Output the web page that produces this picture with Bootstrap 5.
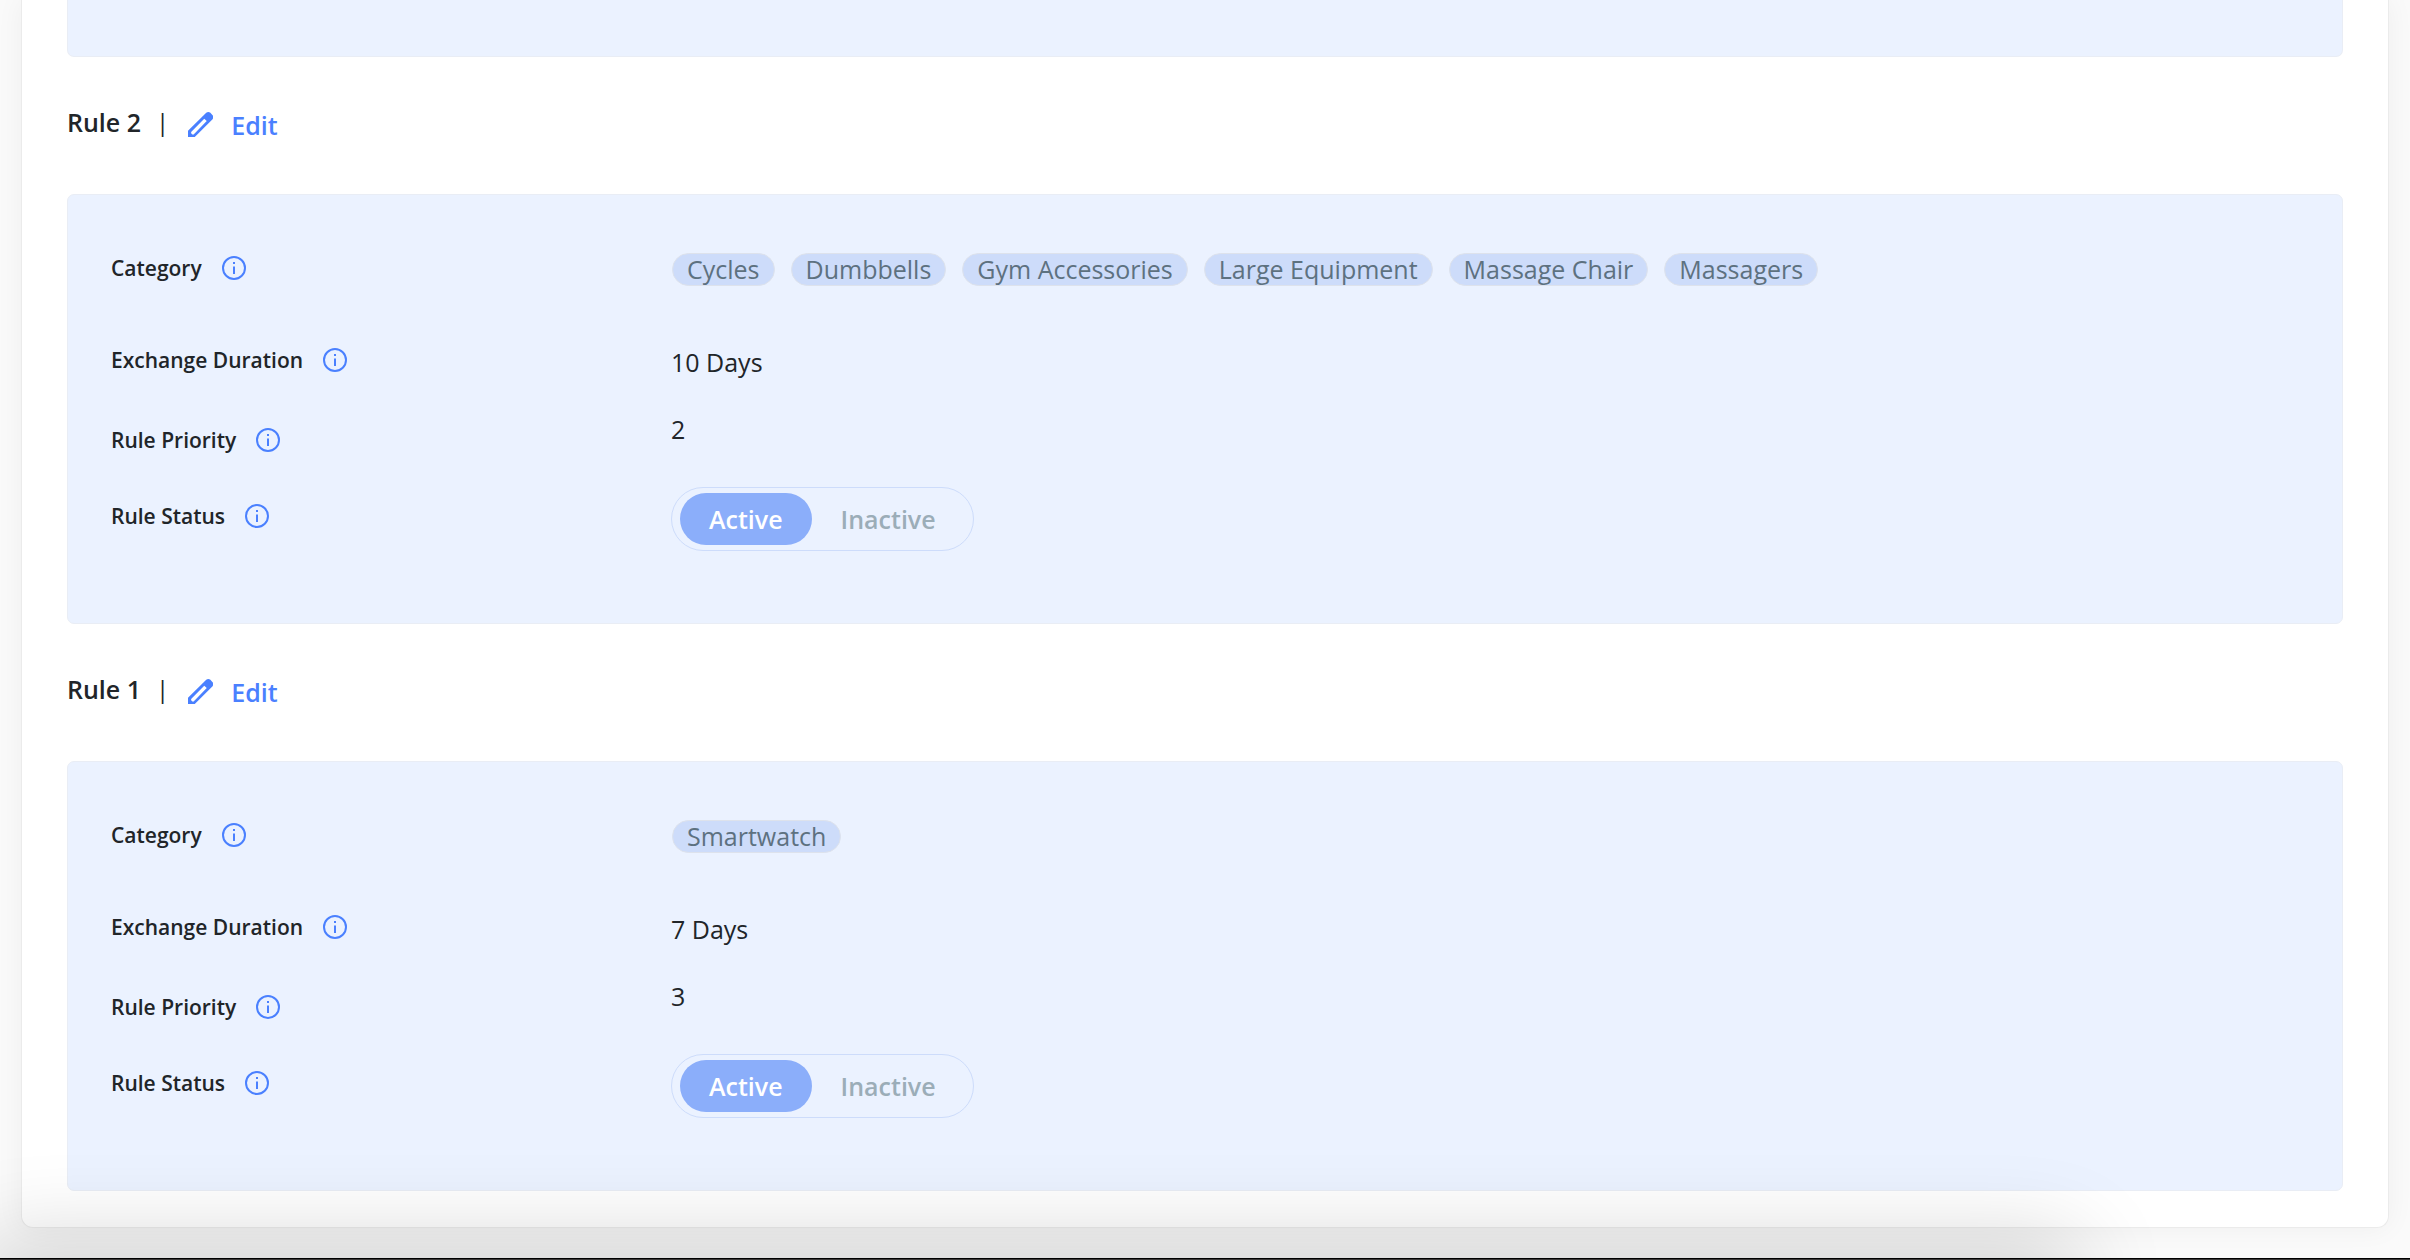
<!DOCTYPE html>
<html lang="en">
<head>
<meta charset="utf-8">
<meta name="viewport" content="width=device-width, initial-scale=1">
<title>Exchange rules</title>
<link href="https://cdn.jsdelivr.net/npm/bootstrap@5.3.0/dist/css/bootstrap.min.css" rel="stylesheet">
<style>
  body { font-family: "Open Sans", "Noto Sans", sans-serif; font-size: 25px; line-height: 36px; color: #212529; background: #fafafa; }
  .page-wrap { min-height: 100vh; overflow: hidden; }
  .rules-card { margin: 0 21px; padding: 0 45px 36px; background: #fff; border: 1px solid #ebebeb; border-width: 0 1px 1px; border-radius: 0 0 12px 12px; box-shadow: 0 0 28px rgba(0,0,0,.05); }
  .rule-panel { background: #ebf2ff; border: 1px solid #e9edf5; border-radius: 7px; padding: 55px 43px 72px; }
  .rule-panel-end { height: 57px; border-top: 0; border-radius: 0 0 7px 7px; padding: 0; }
  .rule-head { height: 137px; padding-top: 47px; }
  .rule-title { font-size: 25px; line-height: 36px; font-weight: 600; }
  .rule-bar { font-size: 24px; margin: 0 19px 0 15px; }
  .edit-btn { margin-top: 3px; gap: 18px; color: #4a80ff; font-weight: 600; font-size: 25px; line-height: 36px; }
  .edit-btn svg { margin-bottom: 2px; }
  .rule-row { display: grid; grid-template-columns: 560px 1fr; align-items: start; }
  .row-category { height: 92px; }
  .row-duration { height: 69px; }
  .row-priority { height: 76px; }
  .row-category dd { padding-top: 3px; }
  .row-duration dd { padding-top: 2px; }
  .row-priority dt, .row-status dt { padding-top: 11px; }
  .rule-row dt { font-size: 21px; font-weight: 600; gap: 20px; }
  .chip { height: 33px; line-height: 31px; padding: 0 14px; border: 1px solid #dde2ec; border-radius: 17px; background: #cddcfa; color: #5d7180; }
  .chip-list { gap: 16px; margin-left: 1px; }
  .status-toggle { height: 64px; padding: 5px 8px; border: 1px solid #cddcfb; border-radius: 32px; }
  .status-toggle label { height: 52px; line-height: 52px; padding: 0 29px; border-radius: 26px; font-weight: 600; color: #9badb8; }
  .status-toggle .btn-check:checked + label { background: #8baefa; color: #fff; }
  .dock-shadow { position: absolute; left: 0; right: 350px; bottom: -44px; height: 44px; box-shadow: 0 0 90px 18px rgba(0,0,0,.18); }
  .bottom-edge { height: 2px; background: #3a3838; border-top: 1px solid #000; }
</style>
</head>
<body>
<svg class="d-none">
  <symbol id="ic-info" viewBox="0 0 24 24"><circle cx="12" cy="12" r="11" fill="none" stroke="#4a80ff" stroke-width="2"/><path d="M11 6h2v2h-2zM11 10.500h2v7.500h-2z" fill="#4a80ff"/></symbol>
  <symbol id="ic-pencil" viewBox="0 0 24 24"><path fill="#4a80ff" fill-rule="evenodd" d="M0 24v-6L17.500 .8Q19.500-.8 21.500.8L23.600 3Q25 5 23.600 7L6.500 24ZM3 19.200V20.500L4.200 21.500H5.400L18 8.700 15.600 6.500Z"/></symbol>
</svg>
<div class="page-wrap position-relative d-flex flex-column">
  <main class="rules-card">
    <section class="rule-panel rule-panel-end" aria-label="Rule 3"></section>

    <header class="rule-head d-flex align-items-start">
      <h2 class="rule-title mb-0">Rule 2</h2><span class="rule-bar">|</span>
      <button type="button" class="edit-btn btn p-0 border-0 d-flex align-items-center"><svg width="25" height="25"><use href="#ic-pencil"/></svg>Edit</button>
    </header>
    <dl class="rule-panel mb-0">
      <div class="rule-row row-category"><dt class="d-flex align-items-center">Category <svg width="24" height="24"><use href="#ic-info"/></svg></dt>
        <dd class="mb-0"><div class="chip-list d-flex flex-wrap"><span class="chip">Cycles</span><span class="chip">Dumbbells</span><span class="chip">Gym Accessories</span><span class="chip">Large Equipment</span><span class="chip">Massage Chair</span><span class="chip">Massagers</span></div></dd></div>
      <div class="rule-row row-duration"><dt class="d-flex align-items-center">Exchange Duration <svg width="24" height="24"><use href="#ic-info"/></svg></dt><dd class="mb-0">10 Days</dd></div>
      <div class="rule-row row-priority"><dt class="d-flex align-items-center">Rule Priority <svg width="24" height="24"><use href="#ic-info"/></svg></dt><dd class="mb-0">2</dd></div>
      <div class="rule-row row-status"><dt class="d-flex align-items-center">Rule Status <svg width="24" height="24"><use href="#ic-info"/></svg></dt>
        <dd class="mb-0 d-flex"><div class="status-toggle d-flex">
          <input class="btn-check" type="radio" name="status2" id="active2" checked disabled><label for="active2">Active</label>
          <input class="btn-check" type="radio" name="status2" id="inactive2" disabled><label for="inactive2">Inactive</label>
        </div></dd></div>
    </dl>

    <header class="rule-head d-flex align-items-start">
      <h2 class="rule-title mb-0">Rule 1</h2><span class="rule-bar">|</span>
      <button type="button" class="edit-btn btn p-0 border-0 d-flex align-items-center"><svg width="25" height="25"><use href="#ic-pencil"/></svg>Edit</button>
    </header>
    <dl class="rule-panel mb-0">
      <div class="rule-row row-category"><dt class="d-flex align-items-center">Category <svg width="24" height="24"><use href="#ic-info"/></svg></dt>
        <dd class="mb-0"><div class="chip-list d-flex flex-wrap"><span class="chip">Smartwatch</span></div></dd></div>
      <div class="rule-row row-duration"><dt class="d-flex align-items-center">Exchange Duration <svg width="24" height="24"><use href="#ic-info"/></svg></dt><dd class="mb-0">7 Days</dd></div>
      <div class="rule-row row-priority"><dt class="d-flex align-items-center">Rule Priority <svg width="24" height="24"><use href="#ic-info"/></svg></dt><dd class="mb-0">3</dd></div>
      <div class="rule-row row-status"><dt class="d-flex align-items-center">Rule Status <svg width="24" height="24"><use href="#ic-info"/></svg></dt>
        <dd class="mb-0 d-flex"><div class="status-toggle d-flex">
          <input class="btn-check" type="radio" name="status1" id="active1" checked disabled><label for="active1">Active</label>
          <input class="btn-check" type="radio" name="status1" id="inactive1" disabled><label for="inactive1">Inactive</label>
        </div></dd></div>
    </dl>
  </main>
  <div class="dock-shadow pe-none"></div>
  <div class="bottom-edge mt-auto position-relative"></div>
</div>
<script src="https://cdn.jsdelivr.net/npm/bootstrap@5.3.0/dist/js/bootstrap.bundle.min.js"></script>
</body>
</html>
